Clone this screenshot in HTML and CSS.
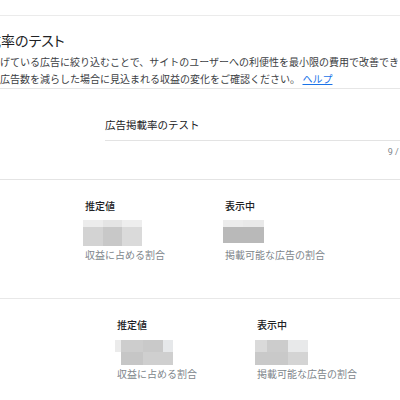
FILE: index.html
```html
<!DOCTYPE html>
<html lang="ja">
<head>
<meta charset="utf-8">
<link rel="stylesheet" href="styles.css">
</head>
<body>
<div class="page">
  <div class="top-gap"></div>
  <section class="intro">
    <h1 class="title">広告掲載率のテスト</h1>
    <p class="desc">げている広告に絞り込むことで、サイトのユーザーへの利便性を最小限の費用で改善でき<br>広告数を減らした場合に見込まれる収益の変化をご確認ください。 <a class="help" href="#">ヘルプ</a></p>
  </section>
  <section class="form">
    <div class="field">
      <div class="input">広告掲載率のテスト</div>
      <div class="counter">9 / 50</div>
    </div>
  </section>
  <section class="stats s1">
    <div class="col">
      <div class="stat-title">推定値</div>
      <div class="mosaic m1">
        <div class="row r-top"><span style="width:20px;background:#ececec"></span><span style="width:19px;background:#e4e4e4"></span><span style="width:20px;background:#eeeeee"></span></div>
        <div class="row r-bot"><span style="width:20px;background:#d3d3d3"></span><span style="width:19px;background:#c8c8c8"></span><span style="width:20px;background:#dadada"></span></div>
      </div>
      <div class="stat-label">収益に占める割合</div>
    </div>
    <div class="col">
      <div class="stat-title">表示中</div>
      <div class="mosaic m2">
        <div class="row r-top"><span style="width:20px;background:#ececec"></span><span style="width:21px;background:#e9e9e9"></span></div>
        <div class="row r-bot"><span style="width:41px;background:#b9b9b9"></span></div>
      </div>
      <div class="stat-label">掲載可能な広告の割合</div>
    </div>
  </section>
  <section class="stats s2">
    <div class="col">
      <div class="stat-title">推定値</div>
      <div class="mosaic m3">
        <div class="row r-top2"><span style="width:6px;background:#ebebeb"></span><span style="width:22px;background:#cdcdcd"></span><span style="width:20px;background:#c9c9c9"></span><span style="width:10px;background:#e6e8ea"></span></div>
        <div class="row r-bot2"><span style="width:6px;background:#ffffff"></span><span style="width:22px;background:#c6c6c6"></span><span style="width:30px;background:#cfcfcf"></span></div>
      </div>
      <div class="stat-label">収益に占める割合</div>
    </div>
    <div class="col">
      <div class="stat-title">表示中</div>
      <div class="mosaic m4">
        <div class="row r-top2"><span style="width:12px;background:#dadada"></span><span style="width:21px;background:#cccccc"></span><span style="width:20px;background:#e8e9ea"></span></div>
        <div class="row r-bot2"><span style="width:33px;background:#c9c9c9"></span><span style="width:20px;background:#d4d4d4"></span></div>
      </div>
      <div class="stat-label">掲載可能な広告の割合</div>
    </div>
  </section>
</div>
</body>
</html>
```
FILE: styles.css
```css
html, body {
  margin: 0;
  padding: 0;
}
body {
  width: 400px;
  height: 400px;
  overflow: hidden;
  background: #ffffff;
  font-family: Roboto, "Noto Sans CJK JP", sans-serif;
  color: #202124;
}
.page {
  width: 400px;
}
.top-gap {
  height: 15px;
  border-bottom: 1px solid #ebebeb;
}
.intro {
  padding-top: 15px;
  border-bottom: 1px solid #e6e6e6;
  white-space: nowrap;
}
.title {
  margin: 0 0 0 -55px;
  font-size: 14px;
  line-height: 20px;
  font-weight: 400;
  font-feature-settings: "palt";
  color: #202124;
}
.desc {
  margin: 3px 0 0 0;
  font-size: 10px;
  line-height: 17px;
  color: #3c4043;
}
.help {
  color: #1a73e8;
  text-decoration: underline;
}
.form {
  padding: 29px 0 21px 105px;
  border-bottom: 1px solid #e4e4e4;
}
.field {
  width: 306px;
}
.input {
  font-size: 10.5px;
  line-height: 16px;
  padding-bottom: 6px;
  border-bottom: 1px solid #e3e3e3;
  color: #202124;
  white-space: nowrap;
}
.counter {
  margin-top: 5px;
  font-size: 9px;
  line-height: 12px;
  color: #80868b;
  text-align: right;
  white-space: nowrap;
}
.stats {
  display: grid;
  grid-template-columns: 140px auto;
  padding-top: 19px;
}
.s1 {
  padding-left: 85px;
  padding-bottom: 34px;
  border-bottom: 1px solid #e8e8e8;
}
.s2 {
  padding-left: 117px;
}
.stat-title {
  font-size: 10px;
  line-height: 16px;
  font-weight: 500;
  color: #202124;
}
.stat-label {
  margin-top: 2px;
  font-size: 10px;
  line-height: 16px;
  color: #80868b;
  white-space: nowrap;
}
.mosaic {
  margin-top: 5px;
  height: 26px;
  margin-left: -2px;
}
.s2 .mosaic {
  margin-top: 6px;
  height: 25px;
}
.row {
  display: flex;
}
.row span {
  display: block;
  height: 100%;
}
.r-top { height: 7px; }
.r-bot { height: 19px; }
.m2 .r-bot { height: 16px; }
.r-top2 { height: 12px; }
.r-bot2 { height: 13px; }
```
